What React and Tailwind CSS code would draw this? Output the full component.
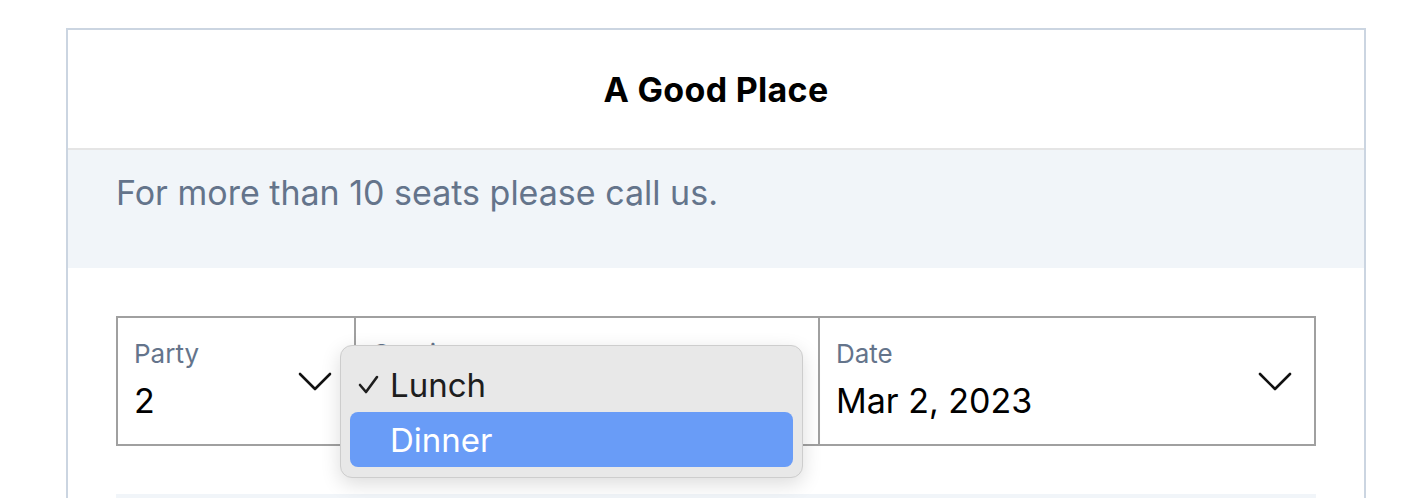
import React from "react";

function Chevron() {
  return (
    <svg width="34" height="19" viewBox="0 0 34 19" fill="none">
      <polyline points="2,2 17,17 32,2" stroke="#111" strokeWidth="2.6" strokeLinecap="round" strokeLinejoin="round" />
    </svg>
  );
}

export default function App() {
  return (
    <div className="w-[1424px] h-[498px] overflow-hidden bg-white pt-[28px] pl-[66px]" style={{ fontFamily: 'Inter, "Noto Sans", sans-serif' }}>
      <div className="w-[1300px] h-[600px] border-2 border-[#cbd5e1] bg-white">
        <div className="h-[120px] flex items-center justify-center border-b-2 border-[#e5e5e5] pt-[2px]">
          <h1 className="text-[34px] leading-[40px] font-bold text-black tracking-[0.3px]">A Good Place</h1>
        </div>
        <div className="h-[118px] bg-[#f1f5f9] pl-[48px] pt-[19px]">
          <p className="text-[34px] leading-[48px] text-[#64748b]">For more than 10 seats please call us.</p>
        </div>
        <div className="px-[48px] pt-[48px]">
          <div className="flex h-[130px] border-2 border-[#a0a0a0]">
            <div className="w-[238px] border-r-2 border-[#a0a0a0] flex items-center justify-between pl-[16px] pr-[22px]">
              <div className="pb-[3px]">
                <div className="text-[26px] leading-[32px] text-[#64748b]">Party</div>
                <div className="mt-[11px] text-[34px] leading-[40px] text-black">2</div>
              </div>
              <Chevron />
            </div>
            <div className="relative w-[464px] border-r-2 border-[#a0a0a0] flex items-center justify-between pl-[17px] pr-[22px]">
              <div className="pb-[3px]">
                <div className="text-[26px] leading-[32px] text-[#64748b]">Service</div>
                <div className="mt-[11px] h-[40px]"></div>
              </div>
              <Chevron />
              <div className="absolute left-[-16px] top-[27px] z-10 w-[463px] h-[133px] rounded-[12px] border border-[#cdcdcd] bg-[#e8e8e8] shadow-[0_6px_20px_rgba(0,0,0,0.14)] px-[9px] pt-[11px]">
                <div className="h-[55px] flex items-center">
                  <svg width="40" height="20" viewBox="0 0 40 20" fill="none" className="ml-[8px]">
                    <polyline points="2,10 8,17 19,2" stroke="#1e1e1e" strokeWidth="2.6" strokeLinecap="round" strokeLinejoin="round" />
                  </svg>
                  <span className="text-[33px] leading-[40px] text-[#1e1e1e] -ml-[8px]">Lunch</span>
                </div>
                <div className="h-[55px] flex items-center rounded-[8px] bg-[#699cf7]">
                  <span className="text-[33px] leading-[40px] text-white pl-[40px]">Dinner</span>
                </div>
              </div>
            </div>
            <div className="flex-1 flex items-center justify-between pl-[16px] pr-[22px]">
              <div className="pb-[3px]">
                <div className="text-[26px] leading-[32px] text-[#64748b]">Date</div>
                <div className="mt-[11px] text-[34px] leading-[40px] text-black">Mar 2, 2023</div>
              </div>
              <Chevron />
            </div>
          </div>
          <div className="mt-[48px] h-[80px] bg-[#f1f5f9]"></div>
        </div>
      </div>
    </div>
  );
}
